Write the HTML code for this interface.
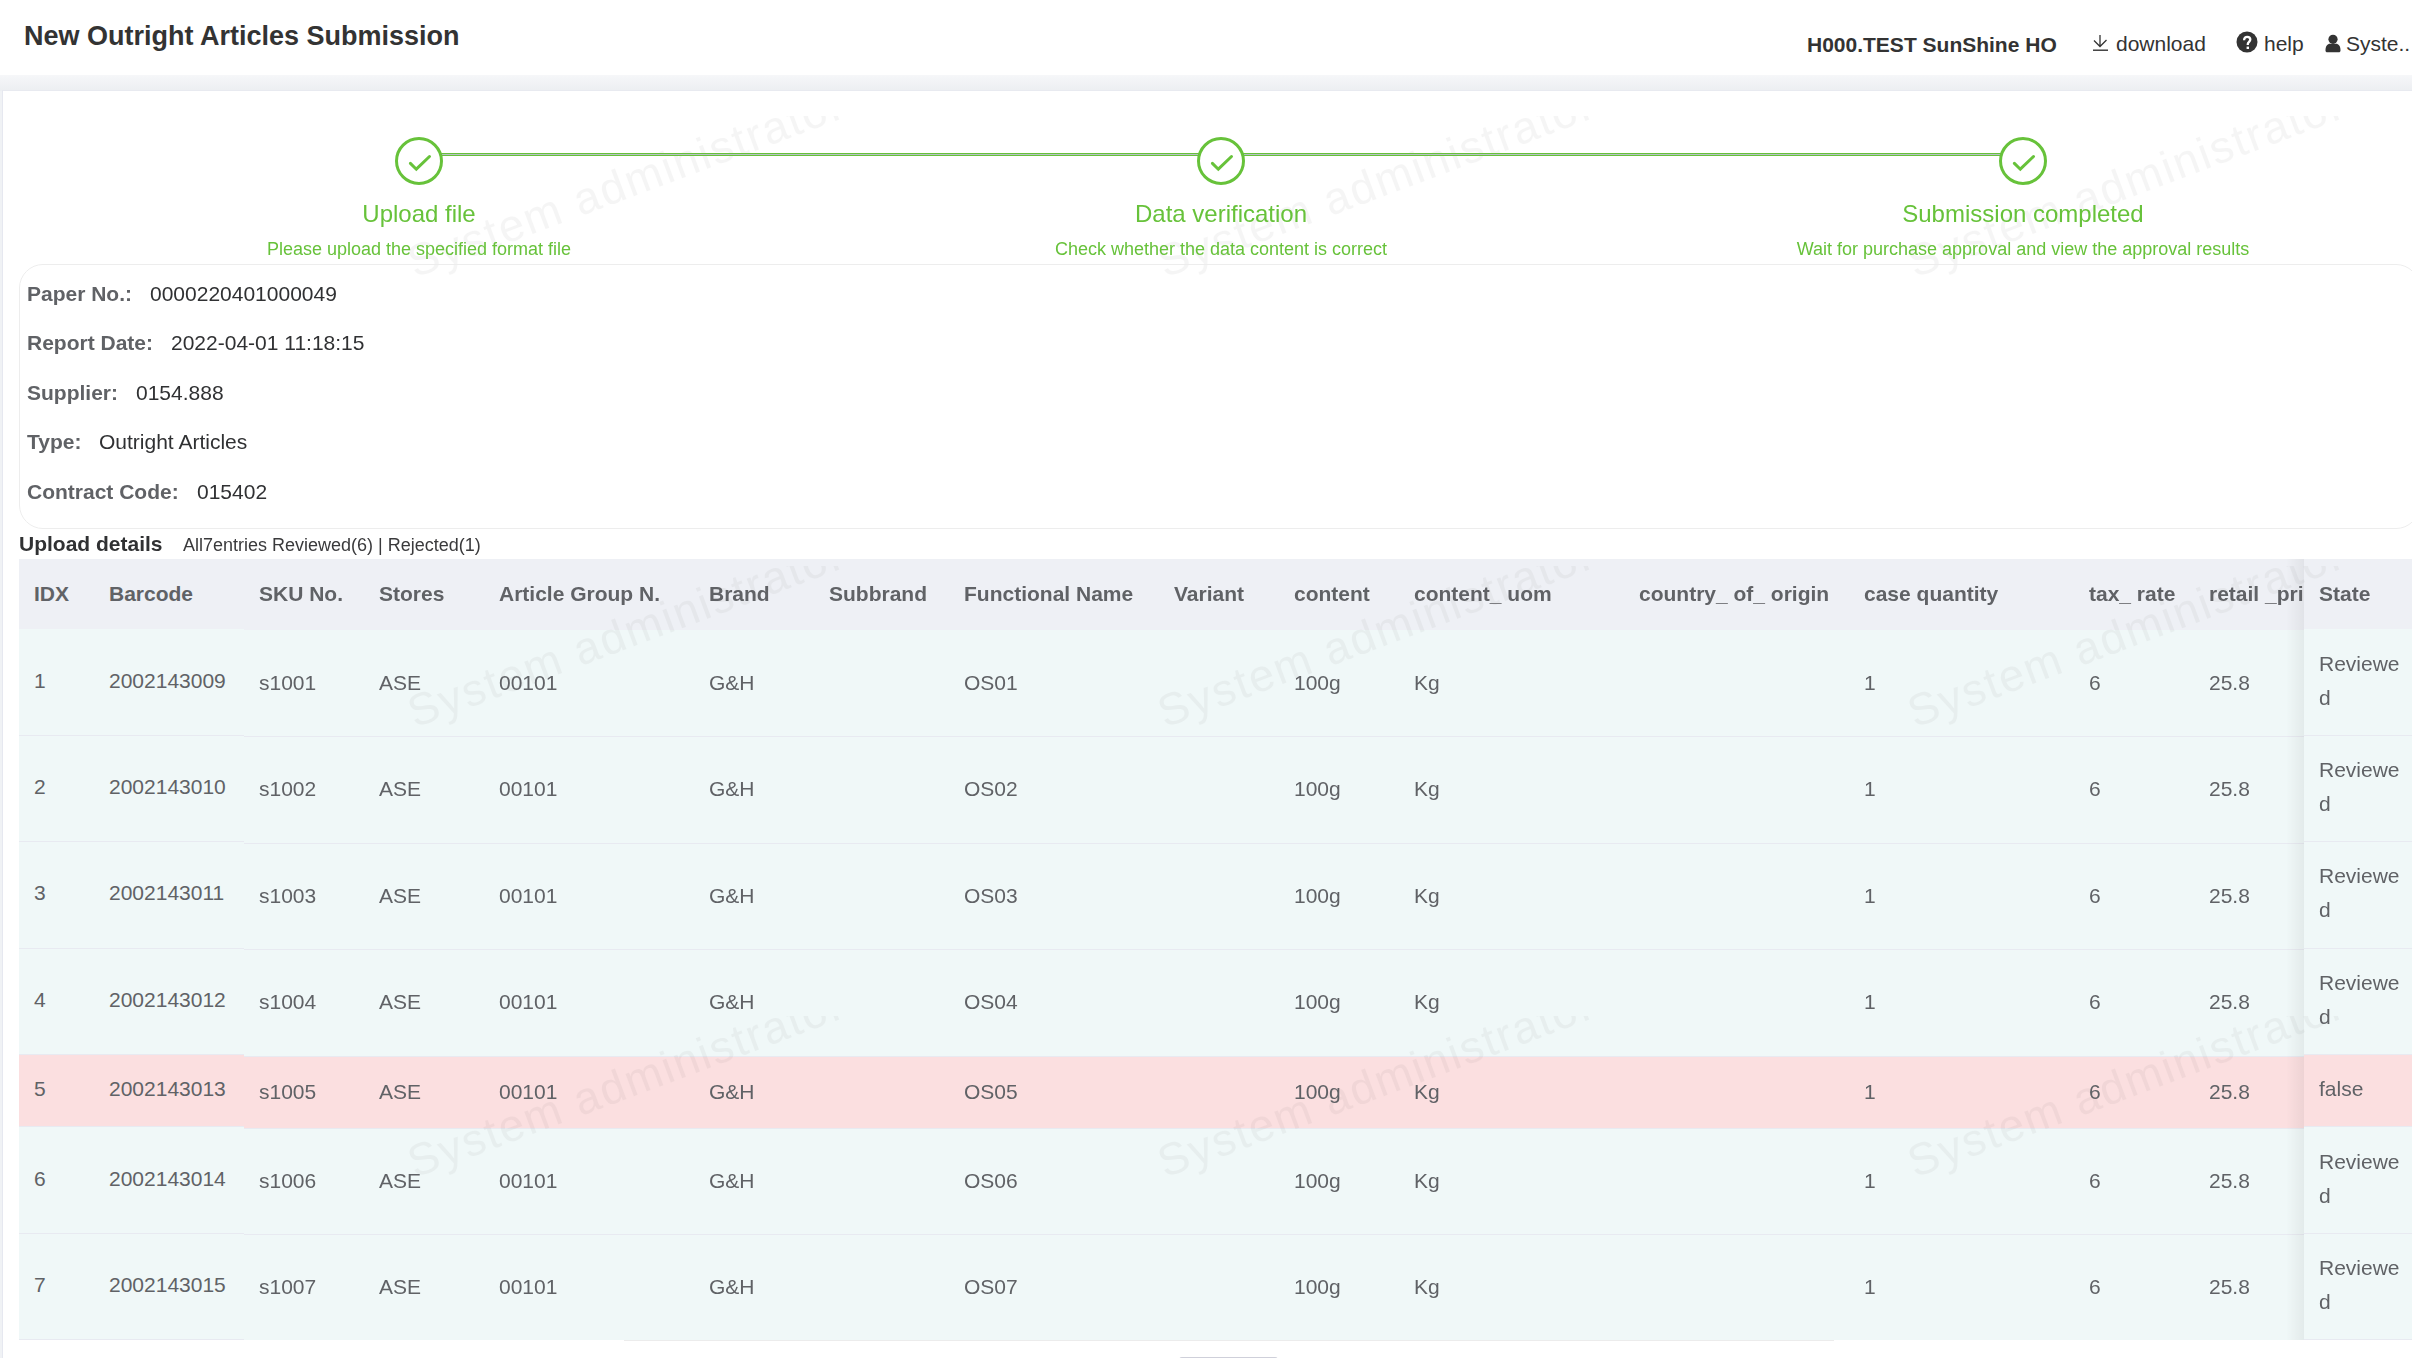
<!DOCTYPE html><html><head><meta charset="utf-8"><title>New Outright Articles Submission</title><style>
html,body{margin:0;padding:0;}
body{width:2412px;height:1358px;overflow:hidden;position:relative;background:#f0f2f5;font-family:"Liberation Sans",sans-serif;}
.t{position:absolute;white-space:nowrap;}
.abs{position:absolute;}
</style></head><body>
<div class="abs" style="left:0px;top:0px;width:2412px;height:75px;background:#fff;"></div>
<div class="abs" style="left:0px;top:75px;width:2412px;height:16px;background:linear-gradient(#f6f7f9,#eceef1);"></div>
<div class="t" style="left:24px;top:20px;font-size:27px;line-height:32px;font-weight:700;color:#333;">New Outright Articles Submission</div>
<div class="t" style="left:1807px;top:32px;font-size:21px;line-height:25px;font-weight:700;color:#333;">H000.TEST SunShine HO</div>
<svg class="abs" style="left:2090px;top:32px" width="22" height="22" viewBox="0 0 22 22"><path d="M10 3 V14.5 M4 8.5 L10 14.5 L16.5 8" stroke="#333" stroke-width="1.3" fill="none"/><path d="M3 18.2 H18" stroke="#333" stroke-width="1.4"/></svg>
<div class="t" style="left:2116px;top:31px;font-size:21px;line-height:25px;font-weight:400;color:#333;">download</div>
<svg class="abs" style="left:2236px;top:31px" width="22" height="22" viewBox="0 0 22 22"><circle cx="11" cy="11" r="10.5" fill="#333"/><path d="M8.1 9.2 C8.1 6.9 9.5 5.8 11.2 5.8 C13 5.8 14.3 7 14.3 8.6 C14.3 10.7 11.8 10.9 11.8 13.1 V14" stroke="#fff" stroke-width="2.3" fill="none"/><rect x="10.6" y="15.6" width="2.4" height="2.4" fill="#fff"/></svg>
<div class="t" style="left:2264px;top:31px;font-size:21px;line-height:25px;font-weight:400;color:#333;">help</div>
<svg class="abs" style="left:2324px;top:33px" width="18" height="20" viewBox="0 0 18 20"><circle cx="9" cy="6.3" r="4.6" fill="#333"/><path d="M1.5 17.5 C1.5 13 3.5 10.8 6 10.8 L12 10.8 C14.5 10.8 16.5 13 16.5 17.5 C16.5 18.6 15.8 19.3 14.8 19.3 H3.2 C2.2 19.3 1.5 18.6 1.5 17.5 Z" fill="#333"/></svg>
<div class="t" style="left:2346px;top:31px;font-size:21px;line-height:25px;font-weight:400;color:#333;">Syste..</div>
<div class="abs" style="left:2px;top:90px;width:2420px;height:1300px;background:#fff;border-left:1px solid #e6e8f0;border-top:1px solid #e8eaf0"></div>
<div class="abs" style="left:244px;top:559px;width:2060px;height:71px;background:#eef0f5;"></div>
<div class="abs" style="left:244px;top:630px;width:2060px;height:106px;background:#f0f8f8;"></div>
<div class="abs" style="left:244px;top:736px;width:2060px;height:1px;background:#e8eaf1;"></div>
<div class="abs" style="left:244px;top:737px;width:2060px;height:106px;background:#f0f8f8;"></div>
<div class="abs" style="left:244px;top:843px;width:2060px;height:1px;background:#e8eaf1;"></div>
<div class="abs" style="left:244px;top:844px;width:2060px;height:105px;background:#f0f8f8;"></div>
<div class="abs" style="left:244px;top:949px;width:2060px;height:1px;background:#e8eaf1;"></div>
<div class="abs" style="left:244px;top:950px;width:2060px;height:106px;background:#f0f8f8;"></div>
<div class="abs" style="left:244px;top:1056px;width:2060px;height:1px;background:#e8eaf1;"></div>
<div class="abs" style="left:244px;top:1057px;width:2060px;height:71px;background:#fbdfe0;"></div>
<div class="abs" style="left:244px;top:1128px;width:2060px;height:1px;background:#e8eaf1;"></div>
<div class="abs" style="left:244px;top:1129px;width:2060px;height:105px;background:#f0f8f8;"></div>
<div class="abs" style="left:244px;top:1234px;width:2060px;height:1px;background:#e8eaf1;"></div>
<div class="abs" style="left:244px;top:1235px;width:2060px;height:105px;background:#f0f8f8;"></div>
<div class="abs" style="left:19px;top:559px;width:225px;height:70px;background:#eef0f5;"></div>
<div class="abs" style="left:19px;top:629px;width:225px;height:106px;background:#f0f8f8;"></div>
<div class="abs" style="left:19px;top:735px;width:225px;height:1px;background:#e8eaf1;"></div>
<div class="abs" style="left:19px;top:736px;width:225px;height:105px;background:#f0f8f8;"></div>
<div class="abs" style="left:19px;top:841px;width:225px;height:1px;background:#e8eaf1;"></div>
<div class="abs" style="left:19px;top:842px;width:225px;height:106px;background:#f0f8f8;"></div>
<div class="abs" style="left:19px;top:948px;width:225px;height:1px;background:#e8eaf1;"></div>
<div class="abs" style="left:19px;top:949px;width:225px;height:105px;background:#f0f8f8;"></div>
<div class="abs" style="left:19px;top:1054px;width:225px;height:1px;background:#e8eaf1;"></div>
<div class="abs" style="left:19px;top:1055px;width:225px;height:71px;background:#fbdfe0;"></div>
<div class="abs" style="left:19px;top:1126px;width:225px;height:1px;background:#e8eaf1;"></div>
<div class="abs" style="left:19px;top:1127px;width:225px;height:106px;background:#f0f8f8;"></div>
<div class="abs" style="left:19px;top:1233px;width:225px;height:1px;background:#e8eaf1;"></div>
<div class="abs" style="left:19px;top:1234px;width:225px;height:105px;background:#f0f8f8;"></div>
<div class="abs" style="left:19px;top:1339px;width:225px;height:1px;background:#e8eaf1;"></div>
<div class="abs" style="left:624px;top:1340px;width:1210px;height:1px;background:#ececec;"></div>
<div class="abs" style="left:2286px;top:559px;width:18px;height:781px;background:linear-gradient(90deg,rgba(0,0,0,0),rgba(0,0,0,0.055));"></div>
<div class="abs" style="left:2304px;top:559px;width:108px;height:70px;background:#eef0f5;"></div>
<div class="abs" style="left:2304px;top:629px;width:108px;height:106px;background:#f0f8f8;"></div>
<div class="abs" style="left:2304px;top:735px;width:108px;height:1px;background:#e8eaf1;"></div>
<div class="abs" style="left:2304px;top:736px;width:108px;height:105px;background:#f0f8f8;"></div>
<div class="abs" style="left:2304px;top:841px;width:108px;height:1px;background:#e8eaf1;"></div>
<div class="abs" style="left:2304px;top:842px;width:108px;height:106px;background:#f0f8f8;"></div>
<div class="abs" style="left:2304px;top:948px;width:108px;height:1px;background:#e8eaf1;"></div>
<div class="abs" style="left:2304px;top:949px;width:108px;height:105px;background:#f0f8f8;"></div>
<div class="abs" style="left:2304px;top:1054px;width:108px;height:1px;background:#e8eaf1;"></div>
<div class="abs" style="left:2304px;top:1055px;width:108px;height:71px;background:#fbdfe0;"></div>
<div class="abs" style="left:2304px;top:1126px;width:108px;height:1px;background:#e8eaf1;"></div>
<div class="abs" style="left:2304px;top:1127px;width:108px;height:106px;background:#f0f8f8;"></div>
<div class="abs" style="left:2304px;top:1233px;width:108px;height:1px;background:#e8eaf1;"></div>
<div class="abs" style="left:2304px;top:1234px;width:108px;height:105px;background:#f0f8f8;"></div>
<div class="abs" style="left:2304px;top:1339px;width:108px;height:1px;background:#e8eaf1;"></div>
<svg class="abs" style="left:0;top:0;pointer-events:none" width="2412" height="1358"><defs><pattern id="wm" patternUnits="userSpaceOnUse" x="100" y="116" width="750" height="450"><text x="315" y="162" transform="rotate(-20.5 315 162)" font-family="Liberation Sans" font-size="45" letter-spacing="2.0" fill="rgba(0,0,0,0.038)">System administrator</text></pattern></defs><rect x="100" y="116" width="2312" height="1242" fill="url(#wm)"/></svg>
<div class="abs" style="left:0;top:0;width:2412px;height:560px;will-change:transform">
<div class="abs" style="left:441px;top:153px;width:758px;height:1px;background:#67c23a;"></div>
<div class="abs" style="left:441px;top:154px;width:758px;height:1px;background:#b9c0c9;"></div>
<div class="abs" style="left:441px;top:155px;width:758px;height:1px;background:#67c23a;"></div>
<div class="abs" style="left:1243px;top:153px;width:758px;height:1px;background:#67c23a;"></div>
<div class="abs" style="left:1243px;top:154px;width:758px;height:1px;background:#b9c0c9;"></div>
<div class="abs" style="left:1243px;top:155px;width:758px;height:1px;background:#67c23a;"></div>
<svg class="abs" style="left:394px;top:136px" width="50" height="50" viewBox="0 0 50 50"><circle cx="25" cy="25" r="22.5" stroke="#67c23a" stroke-width="3" fill="none"/><path d="M16.4 27.4 L22.3 33.2 L35.5 20.5" stroke="#67c23a" stroke-width="3" fill="none" stroke-linecap="round" stroke-linejoin="miter"/></svg>
<div class="t" style="left:19px;width:800px;text-align:center;top:199px;font-size:24px;line-height:29px;font-weight:400;color:#67c23a">Upload file</div>
<div class="t" style="left:19px;width:800px;text-align:center;top:238px;font-size:18px;line-height:22px;font-weight:400;color:#67c23a">Please upload the specified format file</div>
<svg class="abs" style="left:1196px;top:136px" width="50" height="50" viewBox="0 0 50 50"><circle cx="25" cy="25" r="22.5" stroke="#67c23a" stroke-width="3" fill="none"/><path d="M16.4 27.4 L22.3 33.2 L35.5 20.5" stroke="#67c23a" stroke-width="3" fill="none" stroke-linecap="round" stroke-linejoin="miter"/></svg>
<div class="t" style="left:821px;width:800px;text-align:center;top:199px;font-size:24px;line-height:29px;font-weight:400;color:#67c23a">Data verification</div>
<div class="t" style="left:821px;width:800px;text-align:center;top:238px;font-size:18px;line-height:22px;font-weight:400;color:#67c23a">Check whether the data content is correct</div>
<svg class="abs" style="left:1998px;top:136px" width="50" height="50" viewBox="0 0 50 50"><circle cx="25" cy="25" r="22.5" stroke="#67c23a" stroke-width="3" fill="none"/><path d="M16.4 27.4 L22.3 33.2 L35.5 20.5" stroke="#67c23a" stroke-width="3" fill="none" stroke-linecap="round" stroke-linejoin="miter"/></svg>
<div class="t" style="left:1623px;width:800px;text-align:center;top:199px;font-size:24px;line-height:29px;font-weight:400;color:#67c23a">Submission completed</div>
<div class="t" style="left:1623px;width:800px;text-align:center;top:238px;font-size:18px;line-height:22px;font-weight:400;color:#67c23a">Wait for purchase approval and view the approval results</div>
<div class="abs" style="left:19px;top:264px;width:2401px;height:265px;border:1px solid #ededed;border-radius:24px;box-sizing:border-box"></div>
<div class="t" style="left:27px;top:281px;font-size:21px;line-height:25px;font-weight:700;color:#606266;">Paper No.:</div>
<div class="t" style="left:150px;top:281px;font-size:21px;line-height:25px;font-weight:400;color:#303133;">0000220401000049</div>
<div class="t" style="left:27px;top:330px;font-size:21px;line-height:25px;font-weight:700;color:#606266;">Report Date:</div>
<div class="t" style="left:171px;top:330px;font-size:21px;line-height:25px;font-weight:400;color:#303133;">2022-04-01 11:18:15</div>
<div class="t" style="left:27px;top:380px;font-size:21px;line-height:25px;font-weight:700;color:#606266;">Supplier:</div>
<div class="t" style="left:136px;top:380px;font-size:21px;line-height:25px;font-weight:400;color:#303133;">0154.888</div>
<div class="t" style="left:27px;top:429px;font-size:21px;line-height:25px;font-weight:700;color:#606266;">Type:</div>
<div class="t" style="left:99px;top:429px;font-size:21px;line-height:25px;font-weight:400;color:#303133;">Outright Articles</div>
<div class="t" style="left:27px;top:479px;font-size:21px;line-height:25px;font-weight:700;color:#606266;">Contract Code:</div>
<div class="t" style="left:197px;top:479px;font-size:21px;line-height:25px;font-weight:400;color:#303133;">015402</div>
<div class="t" style="left:19px;top:531px;font-size:21px;line-height:25px;font-weight:700;color:#303133;">Upload details</div>
<div class="t" style="left:183px;top:534px;font-size:18px;line-height:22px;font-weight:400;color:#3a3a3c;">All7entries Reviewed(6) | Rejected(1)</div>
</div>
<div class="abs" style="left:244px;top:559px;width:2060px;height:781px;overflow:hidden;will-change:transform">
<div class="t" style="left:15px;top:22px;font-size:21px;line-height:25px;font-weight:700;color:#606266;">SKU No.</div>
<div class="t" style="left:135px;top:22px;font-size:21px;line-height:25px;font-weight:700;color:#606266;">Stores</div>
<div class="t" style="left:255px;top:22px;font-size:21px;line-height:25px;font-weight:700;color:#606266;">Article Group N.</div>
<div class="t" style="left:465px;top:22px;font-size:21px;line-height:25px;font-weight:700;color:#606266;">Brand</div>
<div class="t" style="left:585px;top:22px;font-size:21px;line-height:25px;font-weight:700;color:#606266;">Subbrand</div>
<div class="t" style="left:720px;top:22px;font-size:21px;line-height:25px;font-weight:700;color:#606266;">Functional Name</div>
<div class="t" style="left:930px;top:22px;font-size:21px;line-height:25px;font-weight:700;color:#606266;">Variant</div>
<div class="t" style="left:1050px;top:22px;font-size:21px;line-height:25px;font-weight:700;color:#606266;">content</div>
<div class="t" style="left:1170px;top:22px;font-size:21px;line-height:25px;font-weight:700;color:#606266;">content_ uom</div>
<div class="t" style="left:1395px;top:22px;font-size:21px;line-height:25px;font-weight:700;color:#606266;">country_ of_ origin</div>
<div class="t" style="left:1620px;top:22px;font-size:21px;line-height:25px;font-weight:700;color:#606266;">case quantity</div>
<div class="t" style="left:1845px;top:22px;font-size:21px;line-height:25px;font-weight:700;color:#606266;">tax_ rate</div>
<div class="t" style="left:1965px;top:22px;font-size:21px;line-height:25px;font-weight:700;color:#606266;">retail _price</div>
<div class="t" style="left:15px;top:111px;font-size:21px;line-height:25px;font-weight:400;color:#606266;">s1001</div>
<div class="t" style="left:135px;top:111px;font-size:21px;line-height:25px;font-weight:400;color:#606266;">ASE</div>
<div class="t" style="left:255px;top:111px;font-size:21px;line-height:25px;font-weight:400;color:#606266;">00101</div>
<div class="t" style="left:465px;top:111px;font-size:21px;line-height:25px;font-weight:400;color:#606266;">G&amp;H</div>
<div class="t" style="left:720px;top:111px;font-size:21px;line-height:25px;font-weight:400;color:#606266;">OS01</div>
<div class="t" style="left:1050px;top:111px;font-size:21px;line-height:25px;font-weight:400;color:#606266;">100g</div>
<div class="t" style="left:1170px;top:111px;font-size:21px;line-height:25px;font-weight:400;color:#606266;">Kg</div>
<div class="t" style="left:1620px;top:111px;font-size:21px;line-height:25px;font-weight:400;color:#606266;">1</div>
<div class="t" style="left:1845px;top:111px;font-size:21px;line-height:25px;font-weight:400;color:#606266;">6</div>
<div class="t" style="left:1965px;top:111px;font-size:21px;line-height:25px;font-weight:400;color:#606266;">25.8</div>
<div class="t" style="left:15px;top:217px;font-size:21px;line-height:25px;font-weight:400;color:#606266;">s1002</div>
<div class="t" style="left:135px;top:217px;font-size:21px;line-height:25px;font-weight:400;color:#606266;">ASE</div>
<div class="t" style="left:255px;top:217px;font-size:21px;line-height:25px;font-weight:400;color:#606266;">00101</div>
<div class="t" style="left:465px;top:217px;font-size:21px;line-height:25px;font-weight:400;color:#606266;">G&amp;H</div>
<div class="t" style="left:720px;top:217px;font-size:21px;line-height:25px;font-weight:400;color:#606266;">OS02</div>
<div class="t" style="left:1050px;top:217px;font-size:21px;line-height:25px;font-weight:400;color:#606266;">100g</div>
<div class="t" style="left:1170px;top:217px;font-size:21px;line-height:25px;font-weight:400;color:#606266;">Kg</div>
<div class="t" style="left:1620px;top:217px;font-size:21px;line-height:25px;font-weight:400;color:#606266;">1</div>
<div class="t" style="left:1845px;top:217px;font-size:21px;line-height:25px;font-weight:400;color:#606266;">6</div>
<div class="t" style="left:1965px;top:217px;font-size:21px;line-height:25px;font-weight:400;color:#606266;">25.8</div>
<div class="t" style="left:15px;top:324px;font-size:21px;line-height:25px;font-weight:400;color:#606266;">s1003</div>
<div class="t" style="left:135px;top:324px;font-size:21px;line-height:25px;font-weight:400;color:#606266;">ASE</div>
<div class="t" style="left:255px;top:324px;font-size:21px;line-height:25px;font-weight:400;color:#606266;">00101</div>
<div class="t" style="left:465px;top:324px;font-size:21px;line-height:25px;font-weight:400;color:#606266;">G&amp;H</div>
<div class="t" style="left:720px;top:324px;font-size:21px;line-height:25px;font-weight:400;color:#606266;">OS03</div>
<div class="t" style="left:1050px;top:324px;font-size:21px;line-height:25px;font-weight:400;color:#606266;">100g</div>
<div class="t" style="left:1170px;top:324px;font-size:21px;line-height:25px;font-weight:400;color:#606266;">Kg</div>
<div class="t" style="left:1620px;top:324px;font-size:21px;line-height:25px;font-weight:400;color:#606266;">1</div>
<div class="t" style="left:1845px;top:324px;font-size:21px;line-height:25px;font-weight:400;color:#606266;">6</div>
<div class="t" style="left:1965px;top:324px;font-size:21px;line-height:25px;font-weight:400;color:#606266;">25.8</div>
<div class="t" style="left:15px;top:430px;font-size:21px;line-height:25px;font-weight:400;color:#606266;">s1004</div>
<div class="t" style="left:135px;top:430px;font-size:21px;line-height:25px;font-weight:400;color:#606266;">ASE</div>
<div class="t" style="left:255px;top:430px;font-size:21px;line-height:25px;font-weight:400;color:#606266;">00101</div>
<div class="t" style="left:465px;top:430px;font-size:21px;line-height:25px;font-weight:400;color:#606266;">G&amp;H</div>
<div class="t" style="left:720px;top:430px;font-size:21px;line-height:25px;font-weight:400;color:#606266;">OS04</div>
<div class="t" style="left:1050px;top:430px;font-size:21px;line-height:25px;font-weight:400;color:#606266;">100g</div>
<div class="t" style="left:1170px;top:430px;font-size:21px;line-height:25px;font-weight:400;color:#606266;">Kg</div>
<div class="t" style="left:1620px;top:430px;font-size:21px;line-height:25px;font-weight:400;color:#606266;">1</div>
<div class="t" style="left:1845px;top:430px;font-size:21px;line-height:25px;font-weight:400;color:#606266;">6</div>
<div class="t" style="left:1965px;top:430px;font-size:21px;line-height:25px;font-weight:400;color:#606266;">25.8</div>
<div class="t" style="left:15px;top:520px;font-size:21px;line-height:25px;font-weight:400;color:#606266;">s1005</div>
<div class="t" style="left:135px;top:520px;font-size:21px;line-height:25px;font-weight:400;color:#606266;">ASE</div>
<div class="t" style="left:255px;top:520px;font-size:21px;line-height:25px;font-weight:400;color:#606266;">00101</div>
<div class="t" style="left:465px;top:520px;font-size:21px;line-height:25px;font-weight:400;color:#606266;">G&amp;H</div>
<div class="t" style="left:720px;top:520px;font-size:21px;line-height:25px;font-weight:400;color:#606266;">OS05</div>
<div class="t" style="left:1050px;top:520px;font-size:21px;line-height:25px;font-weight:400;color:#606266;">100g</div>
<div class="t" style="left:1170px;top:520px;font-size:21px;line-height:25px;font-weight:400;color:#606266;">Kg</div>
<div class="t" style="left:1620px;top:520px;font-size:21px;line-height:25px;font-weight:400;color:#606266;">1</div>
<div class="t" style="left:1845px;top:520px;font-size:21px;line-height:25px;font-weight:400;color:#606266;">6</div>
<div class="t" style="left:1965px;top:520px;font-size:21px;line-height:25px;font-weight:400;color:#606266;">25.8</div>
<div class="t" style="left:15px;top:609px;font-size:21px;line-height:25px;font-weight:400;color:#606266;">s1006</div>
<div class="t" style="left:135px;top:609px;font-size:21px;line-height:25px;font-weight:400;color:#606266;">ASE</div>
<div class="t" style="left:255px;top:609px;font-size:21px;line-height:25px;font-weight:400;color:#606266;">00101</div>
<div class="t" style="left:465px;top:609px;font-size:21px;line-height:25px;font-weight:400;color:#606266;">G&amp;H</div>
<div class="t" style="left:720px;top:609px;font-size:21px;line-height:25px;font-weight:400;color:#606266;">OS06</div>
<div class="t" style="left:1050px;top:609px;font-size:21px;line-height:25px;font-weight:400;color:#606266;">100g</div>
<div class="t" style="left:1170px;top:609px;font-size:21px;line-height:25px;font-weight:400;color:#606266;">Kg</div>
<div class="t" style="left:1620px;top:609px;font-size:21px;line-height:25px;font-weight:400;color:#606266;">1</div>
<div class="t" style="left:1845px;top:609px;font-size:21px;line-height:25px;font-weight:400;color:#606266;">6</div>
<div class="t" style="left:1965px;top:609px;font-size:21px;line-height:25px;font-weight:400;color:#606266;">25.8</div>
<div class="t" style="left:15px;top:715px;font-size:21px;line-height:25px;font-weight:400;color:#606266;">s1007</div>
<div class="t" style="left:135px;top:715px;font-size:21px;line-height:25px;font-weight:400;color:#606266;">ASE</div>
<div class="t" style="left:255px;top:715px;font-size:21px;line-height:25px;font-weight:400;color:#606266;">00101</div>
<div class="t" style="left:465px;top:715px;font-size:21px;line-height:25px;font-weight:400;color:#606266;">G&amp;H</div>
<div class="t" style="left:720px;top:715px;font-size:21px;line-height:25px;font-weight:400;color:#606266;">OS07</div>
<div class="t" style="left:1050px;top:715px;font-size:21px;line-height:25px;font-weight:400;color:#606266;">100g</div>
<div class="t" style="left:1170px;top:715px;font-size:21px;line-height:25px;font-weight:400;color:#606266;">Kg</div>
<div class="t" style="left:1620px;top:715px;font-size:21px;line-height:25px;font-weight:400;color:#606266;">1</div>
<div class="t" style="left:1845px;top:715px;font-size:21px;line-height:25px;font-weight:400;color:#606266;">6</div>
<div class="t" style="left:1965px;top:715px;font-size:21px;line-height:25px;font-weight:400;color:#606266;">25.8</div>
</div>
<div class="t" style="left:34px;top:581px;font-size:21px;line-height:25px;font-weight:700;color:#606266;">IDX</div>
<div class="t" style="left:109px;top:581px;font-size:21px;line-height:25px;font-weight:700;color:#606266;">Barcode</div>
<div class="t" style="left:34px;top:668px;font-size:21px;line-height:25px;font-weight:400;color:#606266;">1</div>
<div class="t" style="left:109px;top:668px;font-size:21px;line-height:25px;font-weight:400;color:#606266;">2002143009</div>
<div class="t" style="left:34px;top:774px;font-size:21px;line-height:25px;font-weight:400;color:#606266;">2</div>
<div class="t" style="left:109px;top:774px;font-size:21px;line-height:25px;font-weight:400;color:#606266;">2002143010</div>
<div class="t" style="left:34px;top:880px;font-size:21px;line-height:25px;font-weight:400;color:#606266;">3</div>
<div class="t" style="left:109px;top:880px;font-size:21px;line-height:25px;font-weight:400;color:#606266;">2002143011</div>
<div class="t" style="left:34px;top:987px;font-size:21px;line-height:25px;font-weight:400;color:#606266;">4</div>
<div class="t" style="left:109px;top:987px;font-size:21px;line-height:25px;font-weight:400;color:#606266;">2002143012</div>
<div class="t" style="left:34px;top:1076px;font-size:21px;line-height:25px;font-weight:400;color:#606266;">5</div>
<div class="t" style="left:109px;top:1076px;font-size:21px;line-height:25px;font-weight:400;color:#606266;">2002143013</div>
<div class="t" style="left:34px;top:1166px;font-size:21px;line-height:25px;font-weight:400;color:#606266;">6</div>
<div class="t" style="left:109px;top:1166px;font-size:21px;line-height:25px;font-weight:400;color:#606266;">2002143014</div>
<div class="t" style="left:34px;top:1272px;font-size:21px;line-height:25px;font-weight:400;color:#606266;">7</div>
<div class="t" style="left:109px;top:1272px;font-size:21px;line-height:25px;font-weight:400;color:#606266;">2002143015</div>
<div class="abs" style="left:2304px;top:559px;width:108px;height:781px;will-change:transform">
<div class="t" style="left:15px;top:22px;font-size:21px;line-height:25px;font-weight:700;color:#606266;">State</div>
<div class="t" style="left:15px;top:92px;font-size:21px;line-height:25px;font-weight:400;color:#606266;">Reviewe</div>
<div class="t" style="left:15px;top:126px;font-size:21px;line-height:25px;font-weight:400;color:#606266;">d</div>
<div class="t" style="left:15px;top:198px;font-size:21px;line-height:25px;font-weight:400;color:#606266;">Reviewe</div>
<div class="t" style="left:15px;top:232px;font-size:21px;line-height:25px;font-weight:400;color:#606266;">d</div>
<div class="t" style="left:15px;top:304px;font-size:21px;line-height:25px;font-weight:400;color:#606266;">Reviewe</div>
<div class="t" style="left:15px;top:338px;font-size:21px;line-height:25px;font-weight:400;color:#606266;">d</div>
<div class="t" style="left:15px;top:411px;font-size:21px;line-height:25px;font-weight:400;color:#606266;">Reviewe</div>
<div class="t" style="left:15px;top:445px;font-size:21px;line-height:25px;font-weight:400;color:#606266;">d</div>
<div class="t" style="left:15px;top:517px;font-size:21px;line-height:25px;font-weight:400;color:#606266;">false</div>
<div class="t" style="left:15px;top:590px;font-size:21px;line-height:25px;font-weight:400;color:#606266;">Reviewe</div>
<div class="t" style="left:15px;top:624px;font-size:21px;line-height:25px;font-weight:400;color:#606266;">d</div>
<div class="t" style="left:15px;top:696px;font-size:21px;line-height:25px;font-weight:400;color:#606266;">Reviewe</div>
<div class="t" style="left:15px;top:730px;font-size:21px;line-height:25px;font-weight:400;color:#606266;">d</div>
</div>
<div class="abs" style="left:1179px;top:1357px;width:99px;height:6px;background:#cfd0da;border-radius:3px"></div>
</body></html>
